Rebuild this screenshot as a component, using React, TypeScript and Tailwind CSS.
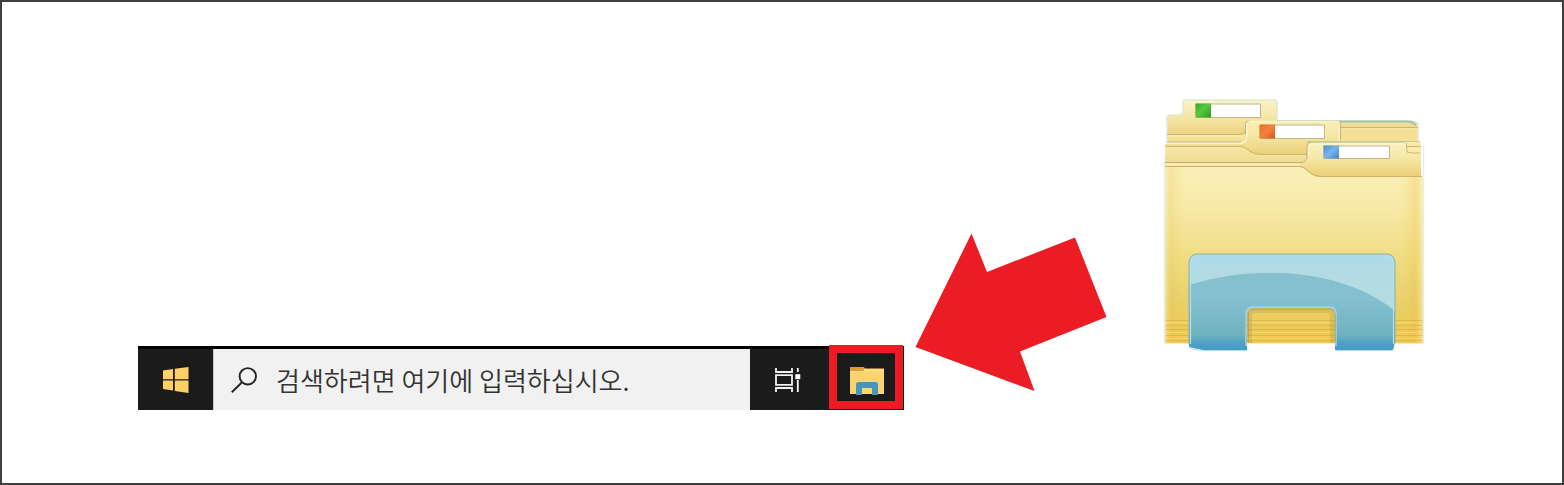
function WindowsLogo() {
  return (
    <svg viewBox="0 0 26 26" className="size-[26px]" aria-hidden="true">
      <g fill="#ffd067">
        <path d="M0 3.5 10 2v10.2H0z" />
        <path d="M11.8 1.7 25.5 0v12.2H11.8z" />
        <path d="M0 13.6h10v9.9L0 22z" />
        <path d="M11.8 13.6h13.7V26l-13.7-2z" />
      </g>
    </svg>
  );
}

function SearchIcon() {
  return (
    <svg viewBox="0 0 26 26" className="size-[26px] shrink-0" fill="none" stroke="#222" strokeWidth="1.9" aria-hidden="true">
      <circle cx="16.8" cy="9.3" r="8.2" />
      <path d="M11 15.2.8 25.2" />
    </svg>
  );
}

function TaskViewIcon() {
  return (
    <svg viewBox="0 0 26 24" className="h-6 w-[26px]" fill="none" stroke="#f4f4f4" strokeWidth="1.8" aria-hidden="true">
      <path d="M1 0v4h16V0M1 24v-4h16v4M1 7.2h16v9.6H1zM22.8 0v4M22.8 12v12" />
      <path d="M20.3 6.2h5v5h-5z" fill="#fff" stroke="none" />
    </svg>
  );
}

function SmallExplorerIcon() {
  return (
    <svg viewBox="0 0 34 29" className="h-[29px] w-[34px]" aria-hidden="true">
      <path d="M0 1h13.500l1.500 1.500h19V28H0z" fill="#fad470" />
      <path d="M0 1h13.500l1.500 1.500L13 5H0z" fill="#dc9f35" />
      <path d="M0 5h13.500l2-2H34v2.500H0z" fill="#ffdc82" />
      <path d="M6 29V18.500Q6 16 8.500 16h17q2.500 0 2.500 2.500V29h-6v-6H12v6z" fill="#4795bd" />
      <path d="M12 28v-5q0-1 1-1h8q1 0 1 1v5z" fill="#ffd76e" />
    </svg>
  );
}

function Arrow() {
  return (
    <svg viewBox="0 0 192 159" className="h-[159px] w-48 shrink-0" aria-hidden="true">
      <path d="M56.500.5 72 39 160 4.500 191.500 84 105 118.500 119.500 158 .5 114z" fill="#ec1c24" />
    </svg>
  );
}

function LibraryFolder() {
  return (
    <svg viewBox="0 0 262 254" className="h-[254px] w-[262px] shrink-0" role="img" aria-label="File Explorer">
      <defs>
        <linearGradient id="back" x1="0" y1="2" x2="0" y2="45" gradientUnits="userSpaceOnUse">
          <stop offset="0" stopColor="#fbf3c8" />
          <stop offset="0.4" stopColor="#f5e6a6" />
          <stop offset="0.78" stopColor="#edd382" />
          <stop offset="0.82" stopColor="#f6e49c" />
          <stop offset="1" stopColor="#f2dd90" />
        </linearGradient>
        <linearGradient id="middle" x1="0" y1="23" x2="0" y2="57" gradientUnits="userSpaceOnUse">
          <stop offset="0" stopColor="#f9efba" />
          <stop offset="0.5" stopColor="#f5e5a0" />
          <stop offset="1" stopColor="#e9cd77" />
        </linearGradient>
        <linearGradient id="middleface" x1="0" y1="48" x2="0" y2="64" gradientUnits="userSpaceOnUse">
          <stop offset="0" stopColor="#f6e8a8" />
          <stop offset="1" stopColor="#f0dc92" />
        </linearGradient>
        <linearGradient id="fronttab" x1="0" y1="44" x2="0" y2="79" gradientUnits="userSpaceOnUse">
          <stop offset="0" stopColor="#fbf2c2" />
          <stop offset="0.5" stopColor="#f5e6a2" />
          <stop offset="1" stopColor="#ebcd75" />
        </linearGradient>
        <linearGradient id="face" x1="0" y1="69" x2="0" y2="245" gradientUnits="userSpaceOnUse">
          <stop offset="0" stopColor="#faf0b8" />
          <stop offset="0.22" stopColor="#f8eaaa" />
          <stop offset="0.5" stopColor="#f0de86" />
          <stop offset="0.78" stopColor="#e8cf68" />
          <stop offset="1" stopColor="#f0c850" />
        </linearGradient>
        <linearGradient id="edge" x1="0" y1="0" x2="1" y2="0">
          <stop offset="0" stopColor="#fff8d8" stopOpacity="0.6" />
          <stop offset="0.03" stopColor="#e5bf45" stopOpacity="0.22" />
          <stop offset="0.09" stopColor="#f5df80" stopOpacity="0" />
          <stop offset="0.9" stopColor="#f5df80" stopOpacity="0" />
          <stop offset="0.965" stopColor="#e8b93b" stopOpacity="0.25" />
          <stop offset="1" stopColor="#fff5c5" stopOpacity="0.6" />
        </linearGradient>
        <linearGradient id="glass" x1="0" y1="156" x2="0" y2="252" gradientUnits="userSpaceOnUse">
          <stop offset="0" stopColor="#b0d9e8" />
          <stop offset="0.6" stopColor="#b4dde0" />
          <stop offset="1" stopColor="#9cd0dc" />
        </linearGradient>
        <linearGradient id="glassdark" x1="0" y1="174" x2="0" y2="252" gradientUnits="userSpaceOnUse">
          <stop offset="0" stopColor="#86c0cc" />
          <stop offset="0.35" stopColor="#84c0d0" />
          <stop offset="0.8" stopColor="#6fb3be" />
          <stop offset="0.92" stopColor="#4f9fc3" />
          <stop offset="1" stopColor="#439bca" />
        </linearGradient>
        <linearGradient id="green" x1="0" y1="0" x2="1" y2="1">
          <stop offset="0" stopColor="#35a92b" />
          <stop offset="0.45" stopColor="#56c93f" />
          <stop offset="1" stopColor="#2b9a20" />
        </linearGradient>
        <linearGradient id="orange" x1="0" y1="0" x2="1" y2="1">
          <stop offset="0" stopColor="#ee6e25" />
          <stop offset="0.5" stopColor="#f0843d" />
          <stop offset="1" stopColor="#d65610" />
        </linearGradient>
        <linearGradient id="blue" x1="0" y1="0" x2="1" y2="1">
          <stop offset="0" stopColor="#4c8fd2" />
          <stop offset="0.5" stopColor="#7ab4ec" />
          <stop offset="1" stopColor="#437fc6" />
        </linearGradient>
        <clipPath id="bracket">
          <path d="M26 249V165q0-9 9-9h188q9 0 9 9v79l-2 8h-58v-36q0-6-6-6H90q-6 0-6 6v36H40z" />
        </clipPath>
      </defs>

      <path d="M4 45V20q0-3 4-3h9q3 0 3-4V5q0-3 3-3h88q3 0 3 3v18h134q7 0 7 4v18z" fill="url(#back)" stroke="#dfe9d6" strokeWidth="1.500" />
      <path d="M4 36.500h73q6-1 6-7M4 44h74" fill="none" stroke="#c9b379" />
      <path d="M177 29.500h78" stroke="#cdb676" />
      <path d="M177 31h78M4 38h75" stroke="#fbf0bd" />
      <path d="M114 23.500h130q6 0 9 4" fill="none" stroke="#a3c2ac" strokeWidth="2" />

      <path d="M2 66V46h77q4-2 4-8V26q0-3 3-3h88q3 0 3 3v17h80v23z" fill="url(#middle)" />
      <path d="M177 31h77v12h-77z" fill="#f5df96" />
      <path d="M3 45.500h74q7-1 7-8V26q0-2.500 3-2.500h87q2 0 2 3v16" fill="none" stroke="#fbf2cb" strokeWidth="1.500" />
      <path d="M82.500 36V26q0-3 3-3M177.500 25v17" fill="none" stroke="#c9b680" />
      <path d="M2 49h76q3 0 8 4t12 4h48v9H2z" fill="url(#middleface)" />
      <path d="M3 48.500h75q3 0 8 4t12 4h47" fill="none" stroke="#cdb778" />

      <path d="M2 80V65h136q6-1 6-8V48q0-4 4-4h96v11h14v25z" fill="url(#fronttab)" />
      <path d="M2 64.500h136q6 0 6-7V48q0-4 4-4h94" fill="none" stroke="#c2ae76" />
      <path d="M146 58V49q0-3 3-3h93" fill="none" stroke="#fdf6d4" />
      <path d="M144 43.500h112" stroke="#bdcc9a" />
      <path d="M244 44h14v11h-10q-4 0-4-4z" fill="#f8ebac" />
      <path d="M244 48.500h14M243.500 45v6q0 4 4 4h10" fill="none" stroke="#cbb574" />

      <path d="M1 69h135q4 0 9 5t12 5h103v166H1z" fill="url(#face)" />
      <path d="M1 69h135q4 0 9 5t12 5h103v166H1z" fill="url(#edge)" />
      <path d="M2 66.500h135" fill="none" stroke="#fbeeb7" strokeWidth="2" />
      <path d="M2 68.500h135q4 0 9 5t12 5h101" fill="none" stroke="#ccb26b" />
      <path d="M2 222.500h258M2 227.500h258M2 231.500h258M2 237.500h258M2 242.500h258" stroke="#c79d3d" strokeOpacity="0.4" />
      <path d="M2 224.500h258M2 234.500h258M2 240.500h258" stroke="#ffda6a" strokeOpacity="0.6" />
      <path d="M1.500 245V63M260.500 245V48" fill="none" stroke="#e3eee8" strokeWidth="1.500" />
      <path d="M1 245.500h260" stroke="#faedb8" />

      <g fill="#fff" stroke="#c3b489" strokeWidth="1">
        <path d="M33 6h64.500v13.500H33z" />
        <path d="M97 27h64.500v13.500H97z" />
        <path d="M161 48h65.500v12.500H161z" />
      </g>
      <path d="M32.500 5.500h15.500v14H32.500z" fill="url(#green)" />
      <path d="M96.500 26.500H112v14H96.500z" fill="url(#orange)" />
      <path d="M160.500 47.500H176v13h-15.500z" fill="url(#blue)" />

      <path d="M86 246h86v8H86z" fill="#fff" />
      <path d="M87 245v-28q0-4 4-4h74q4 0 4 4v28" fill="none" stroke="#b1862c" strokeOpacity="0.25" strokeWidth="4" />
      <g clipPath="url(#bracket)">
        <path d="M26 156h206v96H26z" fill="url(#glass)" />
        <path d="M26 187C90 167 177 169 232 213v39H26z" fill="url(#glassdark)" />
        <path d="M27.500 246V166q0-8 8-8h187q8 0 8 8v80" fill="none" stroke="#b4def2" strokeWidth="1.200" />
        <path d="M83 248v-32q0-7 7-7h76q7 0 7 7v32" fill="none" stroke="#a5d3ea" strokeWidth="1.500" />
      </g>
      <path d="M26 246V165q0-9 9-9h188q9 0 9 9v80" fill="none" stroke="#8db0a2" />
      <path d="M85 244v-27q0-6 6-6h75q6 0 6 6v27" fill="none" stroke="#80813f" strokeOpacity="0.55" />
      <path d="M27 250.500q7 2 14 2h44M173 252.500h56" fill="none" stroke="#b6dcf2" />
    </svg>
  );
}

function Taskbar() {
  return (
    <div className="mt-[248px] flex h-16 min-w-0 flex-1 border-t-[3px] border-black bg-[#1b1b1b] pr-px">
      <button type="button" aria-label="Start" className="flex w-[75px] shrink-0 items-center justify-center">
        <WindowsLogo />
      </button>
      <label className="flex min-w-0 flex-1 items-center gap-[19px] border-l border-[#c8c8c8] bg-[#f1f1f1] pl-[17px]">
        <SearchIcon />
        <input
          type="text"
          aria-label="검색"
          placeholder="검색하려면 여기에 입력하십시오."
          className="min-w-0 flex-1 bg-transparent font-['Noto_Sans_CJK_KR',sans-serif] text-[26px] leading-9 font-[350] text-[#333] outline-none placeholder:text-[#333]"
        />
      </label>
      <button type="button" aria-label="Task View" className="flex w-[79px] shrink-0 items-center justify-center pr-1">
        <TaskViewIcon />
      </button>
      <button
        type="button"
        aria-label="File Explorer"
        className="-mt-1 flex h-16 w-[74px] shrink-0 items-end justify-center border-8 border-[#ec1c24] bg-[#1b1b1b] pb-[6px] pl-[2px]"
      >
        <SmallExplorerIcon />
      </button>
    </div>
  );
}

export default function App() {
  return (
    <main className="flex min-h-screen items-start border-2 border-[#3f3f3f] bg-white pt-24 pr-[137px] pl-[136px]">
      <Taskbar />
      <div className="mt-[135px] mr-14 ml-[11px] shrink-0">
        <Arrow />
      </div>
      <LibraryFolder />
    </main>
  );
}
